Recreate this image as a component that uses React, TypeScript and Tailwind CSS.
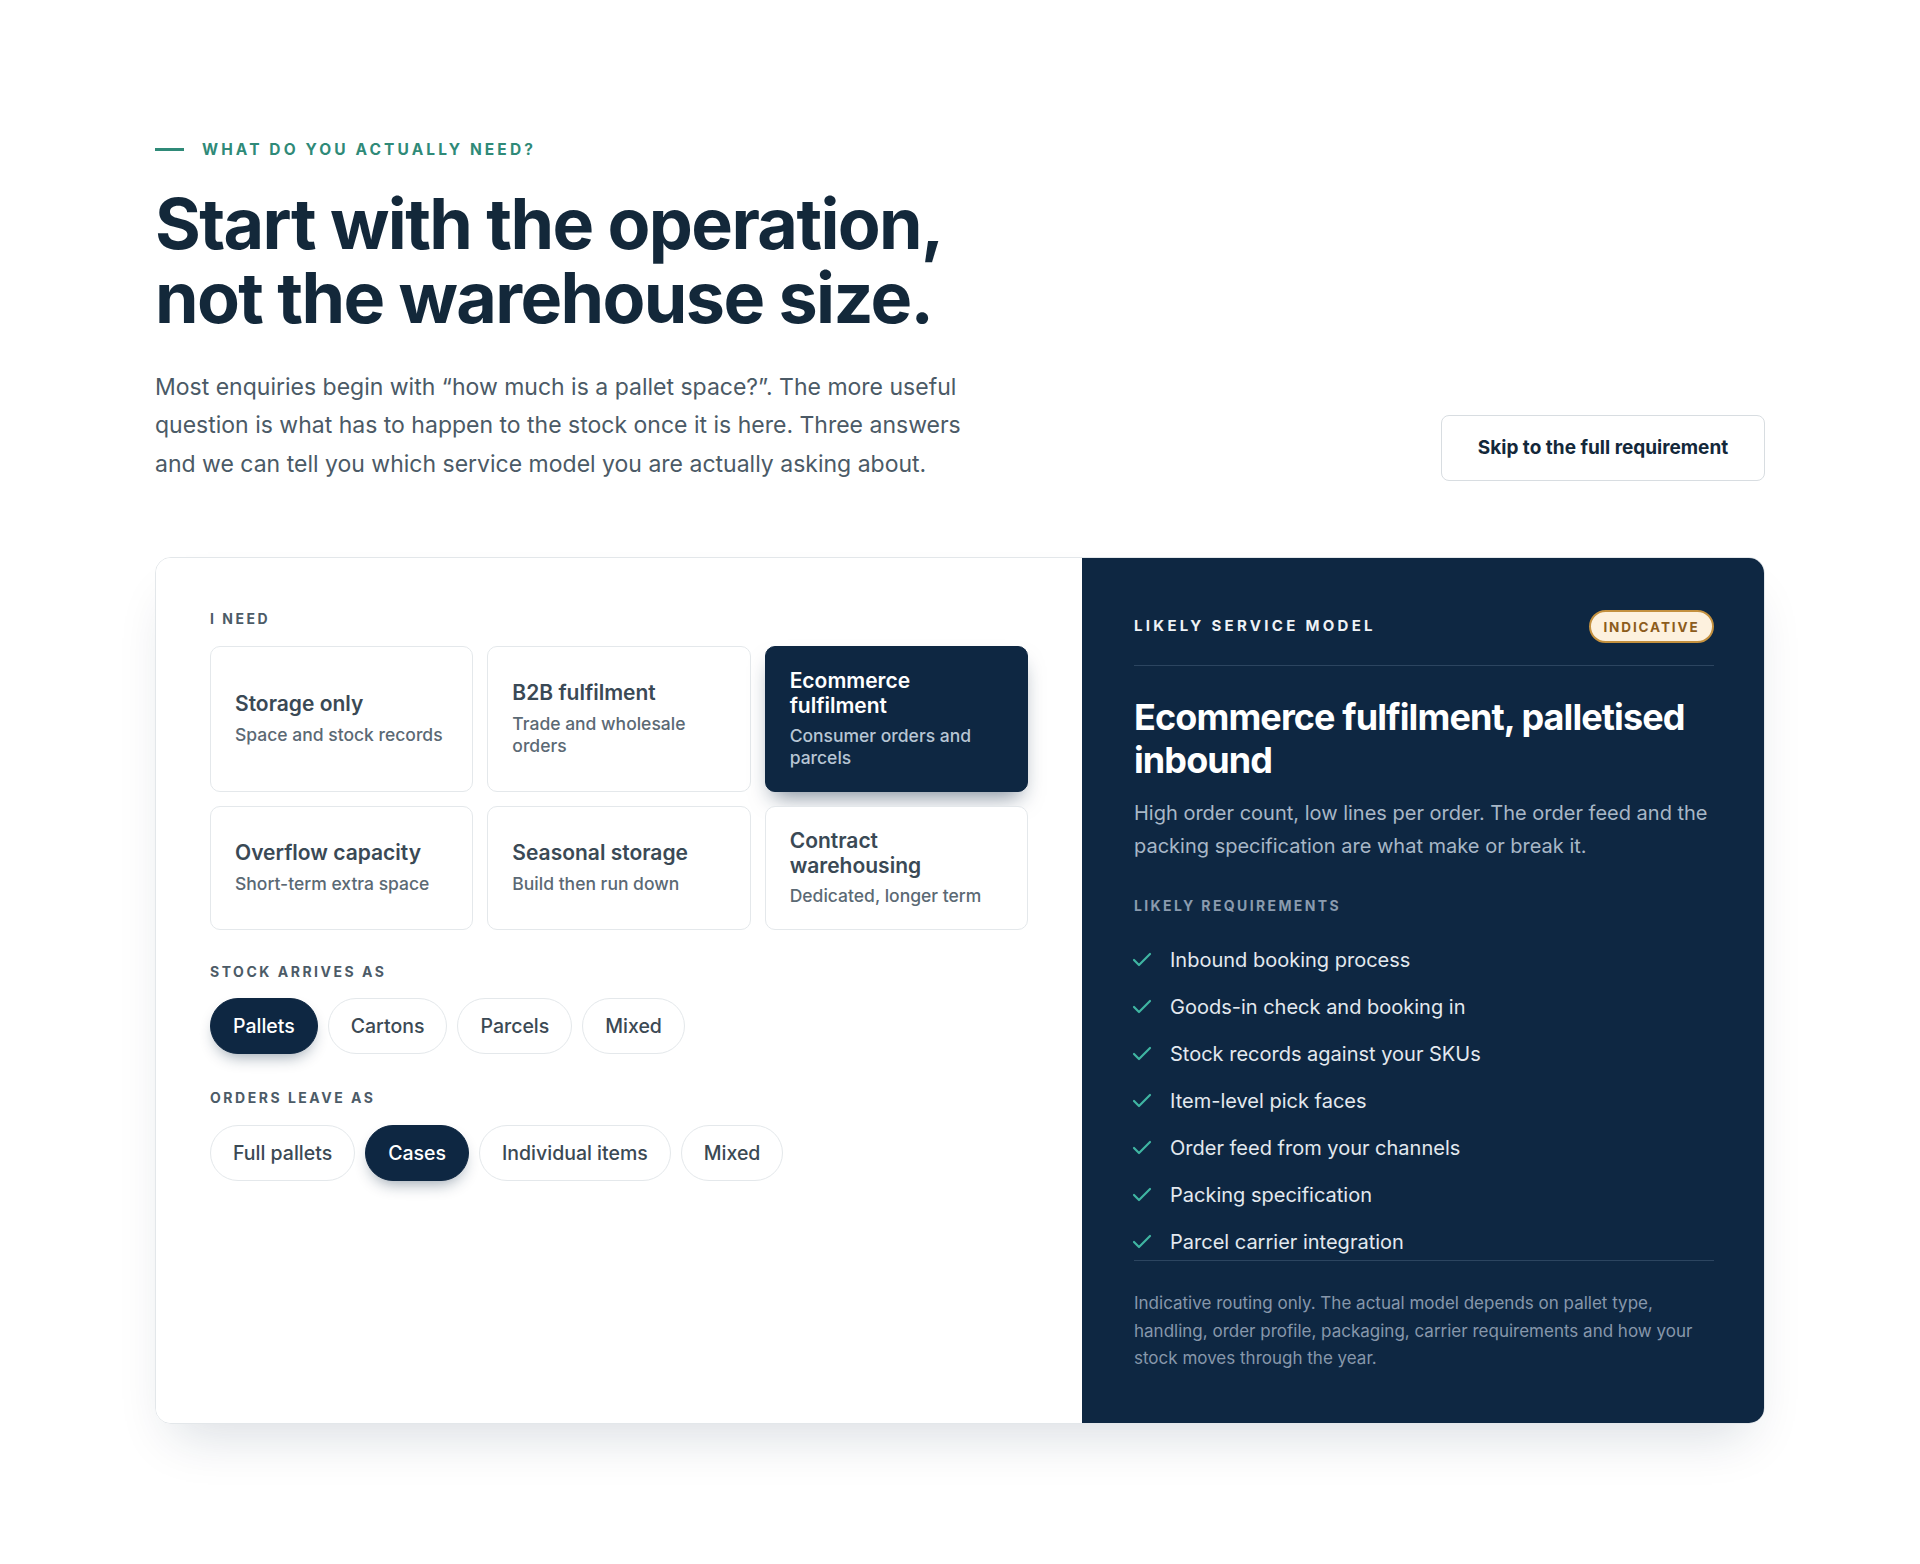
import { Check } from 'lucide-react'

const NEEDS = [
  { title: 'Storage only', sub: 'Space and stock records' },
  { title: 'B2B fulfilment', sub: 'Trade and wholesale orders' },
  { title: 'Ecommerce fulfilment', sub: 'Consumer orders and parcels' },
  { title: 'Overflow capacity', sub: 'Short-term extra space' },
  { title: 'Seasonal storage', sub: 'Build then run down' },
  { title: 'Contract warehousing', sub: 'Dedicated, longer term' },
]

const ARRIVES = ['Pallets', 'Cartons', 'Parcels', 'Mixed']
const LEAVES = ['Full pallets', 'Cases', 'Individual items', 'Mixed']

const REQUIREMENTS = [
  'Inbound booking process',
  'Goods-in check and booking in',
  'Stock records against your SKUs',
  'Item-level pick faces',
  'Order feed from your channels',
  'Packing specification',
  'Parcel carrier integration',
]

function Label({ children }: { children: React.ReactNode }) {
  return <div className="text-[14px] font-bold uppercase tracking-[0.18em] text-[#4c5b67] leading-none">{children}</div>
}

function Pill({ label, active }: { label: string; active: boolean }) {
  return (
    <button
      className={`h-[56px] px-[22px] rounded-full text-[19.5px] font-medium border ${
        active
          ? 'bg-[#0e2742] border-[#0e2742] text-white shadow-[0_8px_16px_-6px_rgba(14,39,66,0.45)]'
          : 'bg-white border-[#e4e8eb] text-[#3b4954]'
      }`}
    >
      {label}
    </button>
  )
}

export default function App() {
  const selectedNeed = 2
  return (
    <div className="min-h-screen bg-white font-['Inter',sans-serif]">
      <div className="mx-auto w-[1610px] pt-[138px] pb-[142px]">
        <div className="flex items-center gap-[18px]">
          <span className="w-[29px] h-[3px] bg-[#2f8a78]" />
          <span className="text-[15.5px] font-bold uppercase tracking-[0.2em] text-[#2f8a78]">What do you actually need?</span>
        </div>

        <div className="flex items-end justify-between">
          <div>
            <h1 className="mt-[26px] text-[70px] font-bold leading-[1.06] tracking-[-0.023em] text-[#13283a]">
              Start with the operation,
              <br />
              not the warehouse size.
            </h1>
            <p className="mt-[32px] w-[830px] text-[23px] leading-[38.5px] text-[#4b5a66]">
              Most enquiries begin with “how much is a pallet space?”. The more useful question is what has to happen to the stock once it is here. Three answers and we can tell you which service model you are actually asking about.
            </p>
          </div>
          <button className="mb-[2px] w-[324px] h-[66px] rounded-lg border border-[#d8dde1] bg-white text-[19px] font-bold text-[#13283a]">
            Skip to the full requirement
          </button>
        </div>

        <div className="mt-[74px] grid grid-cols-[926px_684px] rounded-2xl border border-[#e3e7ea] overflow-hidden shadow-[0_28px_50px_-18px_rgba(15,39,66,0.16)]">
          <div className="bg-white px-[54px] pt-[54px] pb-[54px]">
            <Label>I need</Label>
            <div className="mt-[20px] grid grid-cols-3 gap-[14px]">
              {NEEDS.map((n, i) => {
                const active = i === selectedNeed
                return (
                  <div
                    key={n.title}
                    className={`flex flex-col justify-center rounded-[10px] border px-[24px] py-[22px] ${
                      active
                        ? 'bg-[#0e2742] border-[#0e2742] shadow-[0_12px_22px_-8px_rgba(14,39,66,0.55)]'
                        : 'bg-white border-[#e4e8eb]'
                    }`}
                  >
                    <div className={`text-[21px] font-semibold leading-[24.5px] ${active ? 'text-white' : 'text-[#3a4955]'}`}>{n.title}</div>
                    <div className={`mt-[7px] text-[17.5px] font-medium leading-[22px] ${active ? 'text-[#b7c5d4]' : 'text-[#5b6974]'}`}>{n.sub}</div>
                  </div>
                )
              })}
            </div>

            <div className="mt-[35px]">
              <Label>Stock arrives as</Label>
            </div>
            <div className="mt-[19px] flex gap-[10px]">
              {ARRIVES.map((a, i) => (
                <Pill key={a} label={a} active={i === 0} />
              ))}
            </div>

            <div className="mt-[37px]">
              <Label>Orders leave as</Label>
            </div>
            <div className="mt-[20px] flex gap-[10px]">
              {LEAVES.map((a, i) => (
                <Pill key={a} label={a} active={i === 1} />
              ))}
            </div>
          </div>

          <div className="bg-[#0e2742] px-[52px] pt-[52px] pb-[50px]">
            <div className="flex items-center justify-between pb-[22px] border-b border-[#2c4560]">
              <span className="text-[15px] font-bold uppercase tracking-[0.22em] text-[#eef2f6]">Likely service model</span>
              <span className="h-[33px] w-[125px] flex items-center justify-center rounded-full border-2 border-[#c4913f] bg-[#fdf1de] text-[13.5px] font-bold uppercase tracking-[0.14em] text-[#8c5c1c]">
                Indicative
              </span>
            </div>

            <h2 className="mt-[30px] text-[36px] font-bold leading-[43px] tracking-[-0.025em] text-white">
              Ecommerce fulfilment, palletised inbound
            </h2>
            <p className="mt-[15px] text-[20px] leading-[33px] text-[#a8b7c7]">
              High order count, low lines per order. The order feed and the packing specification are what make or break it.
            </p>

            <div className="mt-[36px] text-[14px] font-bold uppercase tracking-[0.17em] text-[#8a9bae] leading-none">Likely requirements</div>

            <ul className="mt-[33px] pb-[4px] flex flex-col gap-[19px] border-b border-[#2c4560]">
              {REQUIREMENTS.map((r) => (
                <li key={r} className="flex items-center gap-[16px] h-[28px] text-[20px] text-[#e3e9ef]">
                  <Check className="-ml-[4px] w-[24px] h-[24px] text-[#3fb5a2]" strokeWidth={2.2} />
                  {r}
                </li>
              ))}
            </ul>

            <p className="mt-[29px] text-[17px] leading-[27.5px] text-[#8797ab]">
              Indicative routing only. The actual model depends on pallet type, handling, order profile, packaging, carrier requirements and how your stock moves through the year.
            </p>
          </div>
        </div>
      </div>
    </div>
  )
}
